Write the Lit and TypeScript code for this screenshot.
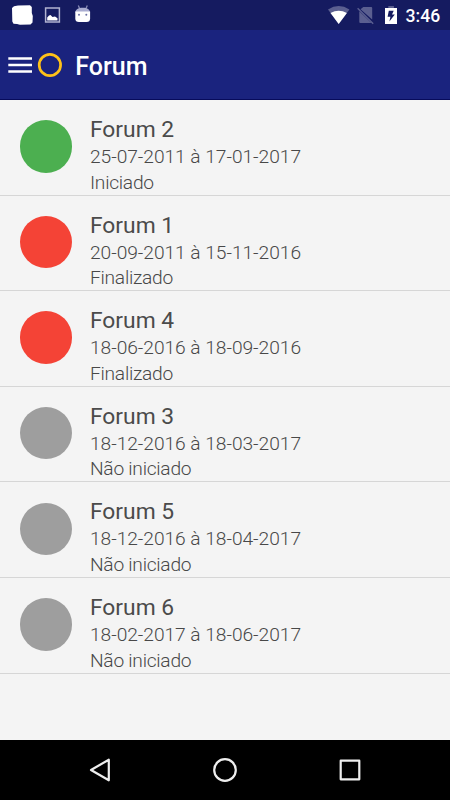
import { LitElement, html, css } from "lit";
import { customElement, property } from "lit/decorators.js";

type Status = "started" | "ended" | "pending";

interface Forum {
  title: string;
  dates: string;
  label: string;
  status: Status;
}

const FORUMS: Forum[] = [
  { title: "Forum 2", dates: "25-07-2011 à 17-01-2017", label: "Iniciado", status: "started" },
  { title: "Forum 1", dates: "20-09-2011 à 15-11-2016", label: "Finalizado", status: "ended" },
  { title: "Forum 4", dates: "18-06-2016 à 18-09-2016", label: "Finalizado", status: "ended" },
  { title: "Forum 3", dates: "18-12-2016 à 18-03-2017", label: "Não iniciado", status: "pending" },
  { title: "Forum 5", dates: "18-12-2016 à 18-04-2017", label: "Não iniciado", status: "pending" },
  { title: "Forum 6", dates: "18-02-2017 à 18-06-2017", label: "Não iniciado", status: "pending" },
];

@customElement("status-bar")
class StatusBar extends LitElement {
  static styles = css`
    :host {
      display: flex;
      justify-content: space-between;
      height: 30px;
      background: #151b60;
      color: #fff;
    }
    .icons { display: block; flex: none; }
    .right { display: flex; }
    .time {
      width: 44.5px;
      font: 500 17.6px/32px Roboto, sans-serif;
      white-space: nowrap;
    }
  `;

  render() {
    return html`
      <svg class="icons" width="100" height="30" viewBox="0 0 100 30">
        <path d="M14 6.2 18 5.6 30 5.3 31.8 7 31.8 13 32.8 16 32.5 22.5 30.5 24.4 20 24.7 17 24 13.5 23.7 12.3 21.5 12 8Z" fill="#fff" />
        <rect x="45.6" y="8" width="13.8" height="14" fill="none" stroke="#b1b3d0" stroke-width="1.5" />
        <path d="M47.2 20.6V17.5L49 15.4 50.5 15 52.5 17 55 16.6 57.5 18.3V20.6Z" fill="#fff" />
        <path d="M78.3 5.4 79.6 8.6M87.3 5.4 86 8.6" stroke="#8589b5" stroke-width="1.3" />
        <path d="M75.3 12.5C75.5 9.5 78 7.8 82.7 7.8S89.9 9.5 90.1 12.5Z" fill="#a9acd0" />
        <path d="M75.3 11.6H90.1V18.5Q90.1 22 86.5 22H79Q75.3 22 75.3 18.5Z" fill="#fff" />
        <circle cx="79" cy="14.8" r="1" fill="#6b70a5" />
        <circle cx="86.3" cy="14.8" r="1" fill="#6b70a5" />
      </svg>
      <div class="right">
        <svg class="icons" width="85.5" height="30" viewBox="320 0 85.5 30">
          <path d="M328 9.4Q338.7 2.6 349.4 9.4L338.7 24Z" fill="#5b5f90" />
          <path d="M330.5 13Q338.7 8.3 346.9 13L338.7 24Z" fill="#fff" />
          <path d="M363.3 7H371.2Q372.2 7 372.2 8V19.5L360.5 9.3ZM359.3 11.3 371.5 23H360.3Q359.3 23 359.3 22Z" fill="#5b5f90" />
          <path d="M357.6 8.3 373.2 23.8" stroke="#5b5f90" stroke-width="1.4" />
          <rect x="388.3" y="6" width="5.6" height="2.3" fill="#5b5f90" />
          <rect x="385" y="8" width="12" height="16" fill="#fff" />
          <path d="M388.8 10.8H393.7L392 14.4H394.8L389.4 21.4 390.4 16.8H387.6Z" fill="#151b60" />
        </svg>
        <span class="time">3:46</span>
      </div>
    `;
  }
}

@customElement("app-header")
class AppHeader extends LitElement {
  static styles = css`
    :host {
      display: flex;
      align-items: center;
      box-sizing: border-box;
      height: 70px;
      padding: 1px 0 0 8px;
      border-bottom: 1px solid #070b5b;
      background: #1a237e;
      color: #fff;
    }
    .logo { flex: none; display: block; }
    .title {
      margin: 3px 0 0 11.3px;
      font: 500 25px/30px Roboto, sans-serif;
    }
  `;

  render() {
    return html`
      <svg class="logo" width="56" height="26" viewBox="8 52 56 26">
        <path d="M8.3 58.5H32M8.3 65H32M8.3 71.5H32" stroke="#fff" stroke-width="2.5" />
        <circle cx="49.9" cy="65" r="10.7" fill="none" stroke="#fec119" stroke-width="2.7" />
      </svg>
      <h1 class="title">Forum</h1>
    `;
  }
}

@customElement("forum-item")
class ForumItem extends LitElement {
  @property({ attribute: false }) forum!: Forum;

  static styles = css`
    :host {
      display: flex;
      box-sizing: border-box;
      height: 95.6px;
      padding: 15px 0 0 20px;
      border-bottom: 1.4px solid #d6d6d6;
      font-family: Roboto, sans-serif;
    }
    .dot {
      flex: none;
      width: 52.4px;
      height: 52.4px;
      margin: 5.2px 17.6px 0 0;
      border-radius: 50%;
    }
    .started { background: #4caf50; }
    .ended { background: #f44336; }
    .pending { background: #9e9e9e; }
    .title {
      font-size: 22.8px;
      line-height: 29px;
      color: #4b4b4b;
    }
    .dates, .label {
      font-size: 19.2px;
      font-weight: 300;
      line-height: 25.7px;
      color: #484848;
      white-space: nowrap;
    }
    .dates { letter-spacing: -0.04px; }
    .label { letter-spacing: -0.26px; }
  `;

  render() {
    const f = this.forum;
    return html`
      <div class="dot ${f.status}"></div>
      <div>
        <div class="title">${f.title}</div>
        <div class="dates">${f.dates}</div>
        <div class="label">${f.label}</div>
      </div>
    `;
  }
}

@customElement("nav-bar")
class NavBar extends LitElement {
  static styles = css`
    :host {
      display: flex;
      align-items: center;
      justify-content: center;
      gap: 95px;
      height: 60px;
      background: #000;
    }
    .key {
      display: block;
      fill: none;
      stroke: #eee;
      stroke-width: 2.2;
      stroke-linejoin: round;
    }
  `;

  render() {
    return html`
      <svg class="key" width="30" height="30" viewBox="85 755 30 30">
        <path d="M91 770 108.8 759.7V780.3Z" />
      </svg>
      <svg class="key" width="30" height="30" viewBox="210 755 30 30">
        <circle cx="225" cy="770" r="10.8" />
      </svg>
      <svg class="key" width="30" height="30" viewBox="335 755 30 30">
        <rect x="340.7" y="760.7" width="18.6" height="18.6" />
      </svg>
    `;
  }
}

@customElement("app-root")
class AppRoot extends LitElement {
  static styles = css`
    :host {
      display: flex;
      flex-direction: column;
      height: 800px;
      background: #f4f4f4;
    }
    .list { flex: 1; min-height: 0; }
  `;

  render() {
    return html`
      <status-bar></status-bar>
      <app-header></app-header>
      <main class="list">
        ${FORUMS.map((forum) => html`<forum-item .forum=${forum}></forum-item>`)}
      </main>
      <nav-bar></nav-bar>
    `;
  }
}
